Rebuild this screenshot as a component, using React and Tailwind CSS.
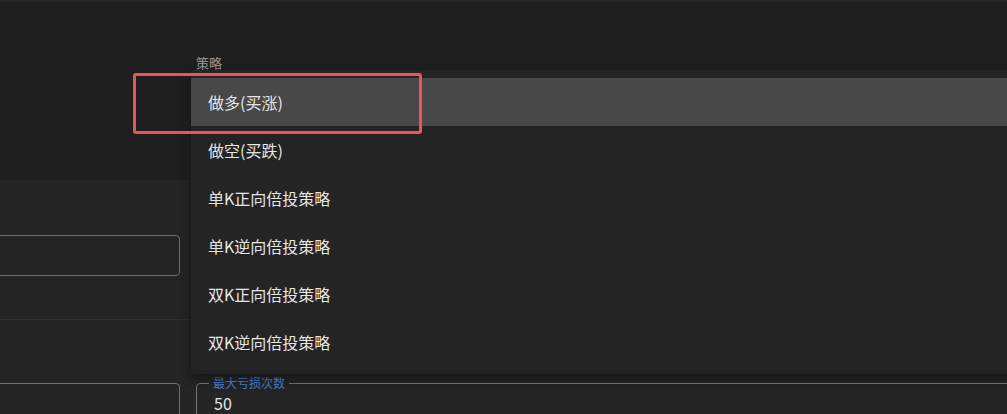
export default function App() {
  const items = ["做多(买涨)", "做空(买跌)", "单K正向倍投策略", "单K逆向倍投策略", "双K正向倍投策略", "双K逆向倍投策略"];
  return (
    <div className="relative w-[1007px] h-[414px] overflow-hidden bg-[#1f1f1f] font-['Noto_Sans_CJK_SC','Noto_Sans',sans-serif]">
      <div className="h-[2px] bg-[#282828]" />
      <div className="h-[178px] flex">
        <div className="w-[196px] shrink-0" />
        <div className="pt-[53px] text-[13px] leading-[16px] text-[#9c9c9c]">策略</div>
      </div>
      <div className="flex h-[234px]">
        <div className="w-[190px] shrink-0 bg-[#252525] flex flex-col">
          <div className="shrink-0 mt-[55px] ml-[-6px] w-[186px] h-[41px] border border-[#6e6e6e] rounded-[4px]" />
          <div className="shrink-0 mt-[43px] h-px bg-[#2f2f2f]" />
          <div className="shrink-0 mt-[63px] ml-[-6px] w-[186px] h-[60px] border border-[#6e6e6e] rounded-[4px]" />
        </div>
        <div className="flex-1 bg-[#252525] pl-[6px] pt-[195px] mr-[-30px]">
          <fieldset className="border border-[#767676] rounded-[4px] h-[60px] px-[12px] m-0">
            <legend className="px-[4px] text-[12px] leading-[16px] text-[#4a7fd3]">最大亏损次数</legend>
            <div className="pl-[5px] mt-[2px] text-[16px] leading-[20px] text-[#e6e6e6]">50</div>
          </fieldset>
        </div>
      </div>

      <div className="absolute left-[191px] top-[70px] w-[840px] bg-[#242424] py-[8px] shadow-[0_5px_5px_-3px_rgba(0,0,0,0.2),0_8px_10px_1px_rgba(0,0,0,0.14),0_3px_14px_2px_rgba(0,0,0,0.12)]">
        {items.map((t, i) => (
          <div
            key={t}
            className={
              "h-[48px] flex items-center pl-[17px] text-[16px] text-[#e6e6e6] " +
              (i === 0 ? "bg-[#484848]" : "")
            }
          >
            {t}
          </div>
        ))}
      </div>

      <div className="absolute left-[133px] top-[73px] w-[289px] h-[61px] border-[3px] border-[#ec5457] rounded-[3px]" />
    </div>
  );
}
